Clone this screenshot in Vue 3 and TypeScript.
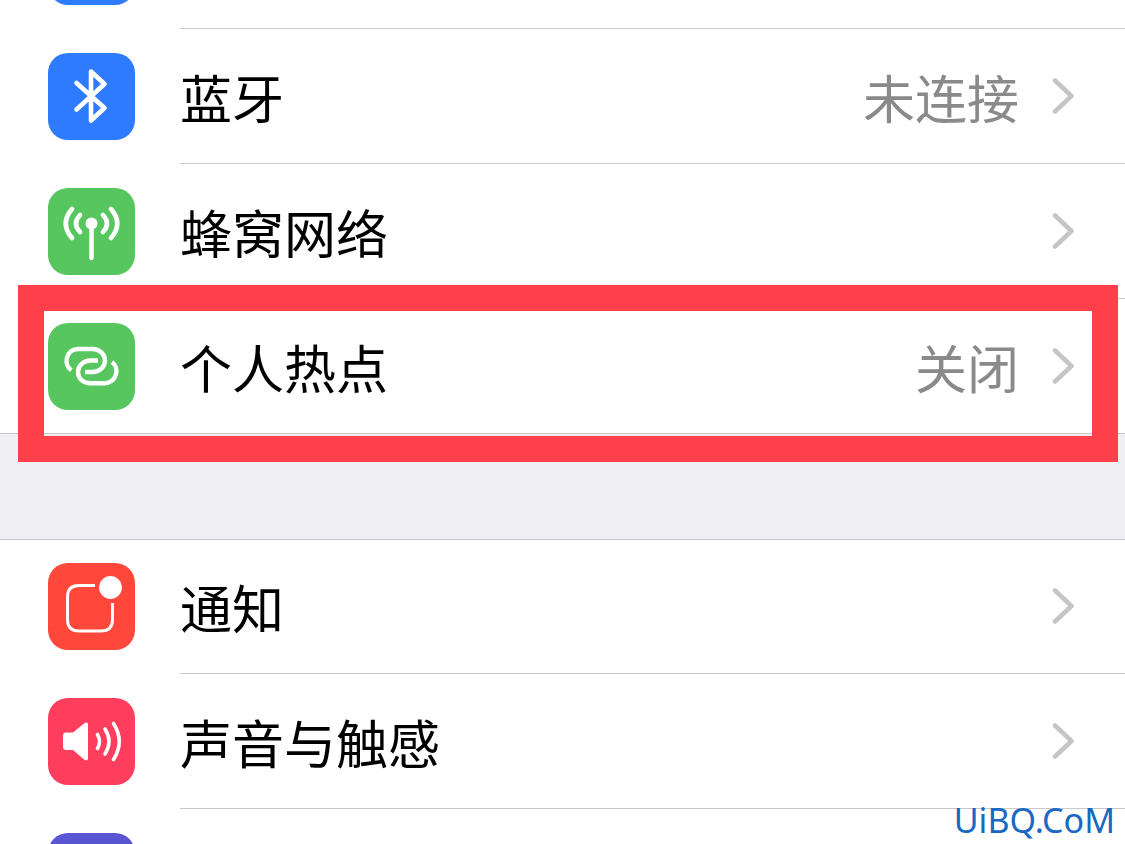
<script setup lang="ts">
type IconName = 'wifi' | 'bluetooth' | 'cellular' | 'hotspot' | 'notifications' | 'sounds' | 'focus'

interface Item {
  icon: IconName
  label: string
  value?: string
  highlighted?: boolean
}

const groups: Item[][] = [
  [
    { icon: 'wifi', label: '' },
    { icon: 'bluetooth', label: '蓝牙', value: '未连接' },
    { icon: 'cellular', label: '蜂窝网络' },
    { icon: 'hotspot', label: '个人热点', value: '关闭', highlighted: true },
  ],
  [
    { icon: 'notifications', label: '通知' },
    { icon: 'sounds', label: '声音与触感' },
    { icon: 'focus', label: '' },
  ],
]
</script>

<template>
  <main class="settings">
    <ul v-for="(group, g) in groups" :key="g" class="group">
      <li v-for="item in group" :key="item.icon" class="item">
        <button class="row" type="button" :aria-label="item.label || item.icon">
          <span class="tile" :class="item.icon">
            <svg viewBox="0 0 87 87" aria-hidden="true">
              <path v-if="item.icon === 'bluetooth'" class="line" stroke-width="4.6" d="M28.500 30 56.500 55 43 67.500V18.500L56.500 31 28.500 56.500" />
              <template v-else-if="item.icon === 'cellular'">
                <circle cx="43.500" cy="35.500" r="6" fill="#fff" />
                <path class="line" stroke-width="4.6" d="M43.500 38V70M32 27Q24 35.500 32 44M55 27Q63 35.500 55 44M24 21Q11.500 35.500 24 50M63 21Q75.500 35.500 63 50" />
              </template>
              <path v-else-if="item.icon === 'hotspot'" class="line flat" stroke-width="4.4" d="M23.300 47.200C14.500 41 18.500 26 30 26H44.500C51.500 26 57 31 57 37.500S51.500 49 44.500 49H37M50 37.500H42.500C35.500 37.500 30 42.500 30 49S35.500 60.200 42.500 60.200H56.500C68 60.200 72.500 45.500 64 39" />
              <template v-else-if="item.icon === 'notifications'">
                <path class="line flat" stroke-width="2.900" d="M47 22.500H31Q19.500 22.500 19.500 34V56.500Q19.500 68 31 68H53Q64.500 68 64.500 56.500V40" />
                <circle cx="62.500" cy="24.500" r="11.400" fill="#fff" />
              </template>
              <template v-else-if="item.icon === 'sounds'">
                <path fill="#fff" d="M18 34.500H25L36 25.500Q40 23 40 27V60Q40 64 36 61.500L25 52H18Q15 52 15 49V37.500Q15 34.500 18 34.500Z" />
                <path class="line" stroke-width="3.600" d="M49.500 36.500Q53.500 43.500 49.500 50.500M57 31Q65 43.500 57 56M65.500 25.500Q77 43.500 65.500 61.500" />
              </template>
            </svg>
          </span>
          <span class="body">
            <span class="label">{{ item.label }}</span>
            <span v-if="item.value" class="value">{{ item.value }}</span>
            <svg class="chevron" viewBox="0 0 24 38" aria-hidden="true">
              <path d="M3 3.500 19.500 19 3 34.500" />
            </svg>
          </span>
        </button>
        <span v-if="item.highlighted" class="frame"></span>
      </li>
    </ul>
    <span class="watermark">UiBQ.CoM</span>
  </main>
</template>

<style>
body {
  margin: 0;
}
</style>

<style scoped>
.settings {
  position: relative;
  height: 100vh;
  overflow: hidden;
  display: flex;
  flex-direction: column;
  gap: 105px;
  background: #efeff4;
  font-family: "Liberation Sans", "Noto Sans CJK SC", sans-serif;
}
.group {
  flex: none;
  margin: 0;
  padding: 0;
  list-style: none;
  background: #fff;
  box-shadow: inset 0 1px #c6c6ca;
}
.group:first-child {
  margin-top: -106px;
}
.item {
  position: relative;
}
.row {
  display: flex;
  align-items: center;
  width: 100%;
  height: 135px;
  padding: 0 0 0 48px;
  border: 0;
  background: none;
  font: inherit;
  text-align: left;
}
.item:last-child .row {
  box-shadow: inset 0 -1px #c6c6ca;
}
.tile {
  flex: none;
  width: 87px;
  height: 87px;
  margin-right: 45px;
  border-radius: 20px;
  overflow: hidden;
}
.tile svg {
  display: block;
}
.wifi,
.bluetooth {
  background: #2f7bff;
}
.cellular,
.hotspot {
  background: #57c65e;
}
.notifications {
  background: #ff483b;
}
.sounds {
  background: #ff3d5d;
}
.focus {
  background: #5a55d2;
}
.line {
  fill: none;
  stroke: #fff;
  stroke-linecap: round;
  stroke-linejoin: round;
}
.flat {
  stroke-linecap: butt;
}
.body {
  flex: 1;
  display: flex;
  align-items: center;
  box-sizing: border-box;
  height: 135px;
  padding-right: 49px;
  border-bottom: 1px solid #c8c8ca;
  font-size: 52px;
  line-height: 72px;
}
.label,
.value {
  padding-top: 9px;
}
.label {
  flex: 1;
  color: #000;
}
.value {
  margin-right: 33px;
  color: #8a8a8a;
}
.chevron {
  width: 24px;
  height: 38px;
}
.chevron path {
  fill: none;
  stroke: #c5c5c7;
  stroke-width: 4.5;
  stroke-linecap: round;
  stroke-linejoin: round;
}
.frame {
  position: absolute;
  inset: -14px 7px -28px 18px;
  border: 26px solid #ff404b;
  pointer-events: none;
}
.watermark {
  position: absolute;
  right: 10px;
  bottom: 4px;
  color: #1868c4;
  font-family: "Noto Sans", sans-serif;
  font-size: 34px;
  line-height: 40px;
}
</style>
